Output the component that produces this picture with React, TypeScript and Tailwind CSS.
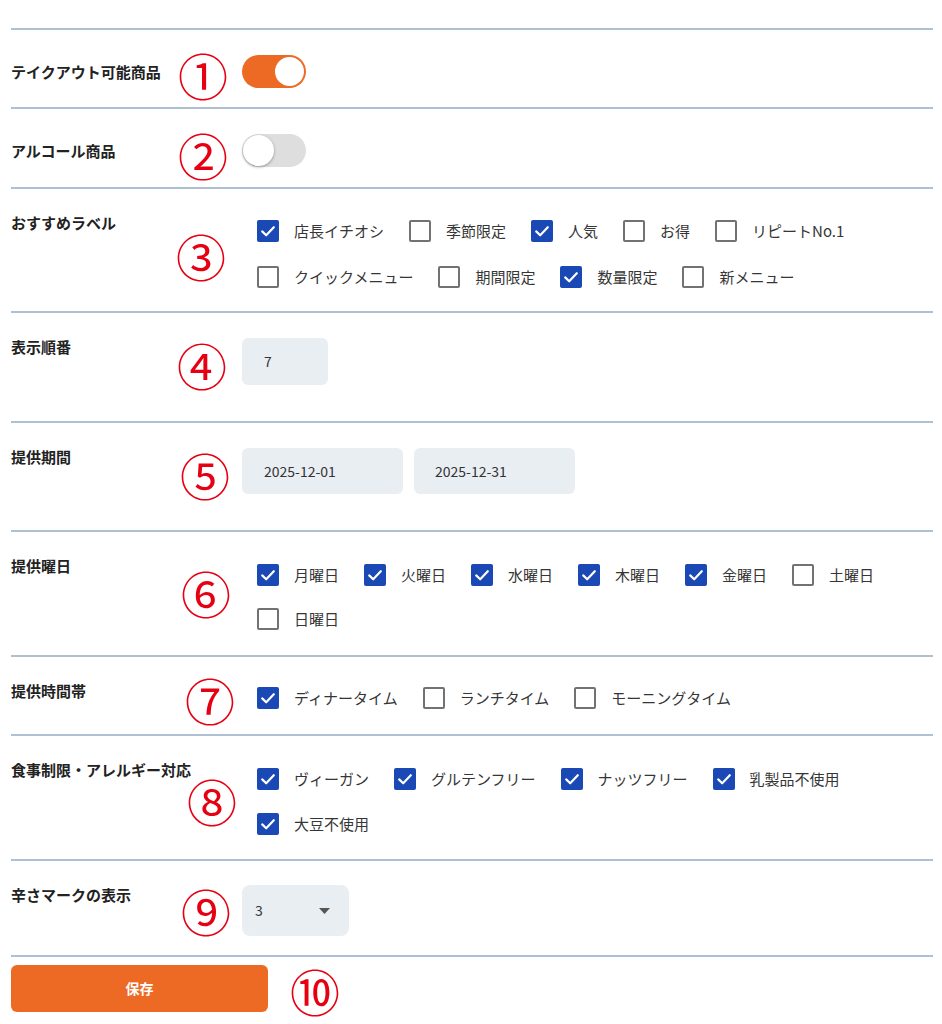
import React from "react";

const FONT = { fontFamily: '"Noto Sans CJK JP", "Noto Sans", sans-serif' };

function Mark({ ch, cls }: { ch: string; cls: string }) {
  return (
    <span
      className={`pointer-events-none absolute flex h-[50px] w-[50px] items-center justify-center text-[50px] leading-none text-[#e60012] ${cls}`}
    >
      {ch}
    </span>
  );
}

function Toggle({ on }: { on: boolean }) {
  return on ? (
    <div className="flex h-[33px] w-[64px] items-center justify-end rounded-full bg-[#ed6a25] px-[2px]">
      <div className="h-[29px] w-[29px] rounded-full bg-white" />
    </div>
  ) : (
    <div className="flex h-[33px] w-[64px] items-center justify-start rounded-full bg-[#dedede] px-[1px]">
      <div className="h-[31px] w-[31px] rounded-full bg-white shadow-[0_1px_3px_rgba(0,0,0,0.35)]" />
    </div>
  );
}

function Box({ checked }: { checked: boolean }) {
  return checked ? (
    <span className="flex h-[22px] w-[22px] shrink-0 items-center justify-center rounded-[2px] bg-[#1a48b4]">
      <svg width="22" height="22" viewBox="0 0 22 22" fill="none">
        <path d="M5.2 11.4 L9.2 15.3 L16.8 7.2" stroke="white" strokeWidth="2.2" strokeLinecap="round" strokeLinejoin="round" />
      </svg>
    </span>
  ) : (
    <span className="h-[22px] w-[22px] shrink-0 rounded-[2px] border-2 border-[#727272] bg-white" />
  );
}

function Checks({ items, lineCls }: { items: [string, boolean][]; lineCls: string }) {
  return (
    <div className="flex flex-wrap gap-x-[25px] pl-[15px]">
      {items.map(([t, c]) => (
        <div key={t} className={`flex items-center ${lineCls}`}>
          <Box checked={c} />
          <span className="ml-[15px] whitespace-nowrap text-[15px] leading-5 text-[#363636]">{t}</span>
        </div>
      ))}
    </div>
  );
}

function Label({ children, top = true }: { children: React.ReactNode; top?: boolean }) {
  return (
    <div className={`w-[231px] shrink-0 text-[15px] font-bold leading-5 text-[#222] ${top ? "pt-[24px]" : ""}`}>
      {children}
    </div>
  );
}

export default function App() {
  return (
    <div className="min-h-[1024px] bg-white pl-[11px] pr-[9px] pt-[28px]" style={FONT}>
      {/* row 1 */}
      <div className="relative flex items-center border-t-2 border-[#afc1d0] pb-[19px] pt-[25px]">
        <Label top={false}>テイクアウト可能商品</Label>
        <Toggle on={true} />
        <Mark ch="①" cls="left-[167px] top-[19px]" />
      </div>
      {/* row 2 */}
      <div className="relative flex items-center border-t-2 border-[#afc1d0] pb-[20px] pt-[25px]">
        <Label top={false}>アルコール商品</Label>
        <Toggle on={false} />
        <Mark ch="②" cls="left-[167px] top-[20px]" />
      </div>
      {/* row 3 */}
      <div className="relative flex border-t-2 border-[#afc1d0]">
        <Label>おすすめラベル</Label>
        <div className="flex-1 pb-[11px] pt-[19px]">
          <Checks
            lineCls="h-[46px]"
            items={[
              ["店長イチオシ", true],
              ["季節限定", false],
              ["人気", true],
              ["お得", false],
              ["リピートNo.1", false],
              ["クイックメニュー", false],
              ["期間限定", false],
              ["数量限定", true],
              ["新メニュー", false],
            ]}
          />
        </div>
        <Mark ch="③" cls="left-[165px] top-[41px]" />
      </div>
      {/* row 4 */}
      <div className="relative flex border-t-2 border-[#afc1d0]">
        <Label>表示順番</Label>
        <div className="flex-1 pb-[36px] pt-[25px]">
          <div className="flex h-[47px] w-[86px] items-center rounded-md bg-[#e9eef3] pl-[22px] text-[14px] text-[#333]">7</div>
        </div>
        <Mark ch="④" cls="left-[166px] top-[26px]" />
      </div>
      {/* row 5 */}
      <div className="relative flex border-t-2 border-[#afc1d0]">
        <Label>提供期間</Label>
        <div className="flex flex-1 gap-[11px] pb-[36px] pt-[25px]">
          <div className="flex h-[46px] w-[161px] items-center rounded-md bg-[#e9eef3] pl-[22px] text-[14px] text-[#333]">2025-12-01</div>
          <div className="flex h-[46px] w-[161px] items-center rounded-md bg-[#e9eef3] pl-[21px] text-[14px] text-[#333]">2025-12-31</div>
        </div>
        <Mark ch="⑤" cls="left-[169px] top-[26px]" />
      </div>
      {/* row 6 */}
      <div className="relative flex border-t-2 border-[#afc1d0]">
        <Label>提供曜日</Label>
        <div className="flex-1 pb-[14px] pt-[21px]">
          <Checks
            lineCls="h-[44px]"
            items={[
              ["月曜日", true],
              ["火曜日", true],
              ["水曜日", true],
              ["木曜日", true],
              ["金曜日", true],
              ["土曜日", false],
              ["日曜日", false],
            ]}
          />
        </div>
        <Mark ch="⑥" cls="left-[170px] top-[35px]" />
      </div>
      {/* row 7 */}
      <div className="relative flex border-t-2 border-[#afc1d0]">
        <Label>提供時間帯</Label>
        <div className="flex-1 pb-[14px] pt-[19px]">
          <Checks
            lineCls="h-[44px]"
            items={[
              ["ディナータイム", true],
              ["ランチタイム", false],
              ["モーニングタイム", false],
            ]}
          />
        </div>
        <Mark ch="⑦" cls="left-[174px] top-[17px]" />
      </div>
      {/* row 8 */}
      <div className="relative flex border-t-2 border-[#afc1d0]">
        <Label>食事制限・アレルギー対応</Label>
        <div className="flex-1 pb-[13px] pt-[20px]">
          <Checks
            lineCls="h-[45px]"
            items={[
              ["ヴィーガン", true],
              ["グルテンフリー", true],
              ["ナッツフリー", true],
              ["乳製品不使用", true],
              ["大豆不使用", true],
            ]}
          />
        </div>
        <Mark ch="⑧" cls="left-[176px] top-[39px]" />
      </div>
      {/* row 9 */}
      <div className="relative flex border-t-2 border-[#afc1d0]">
        <Label>辛さマークの表示</Label>
        <div className="flex-1 pb-[19px] pt-[24px]">
          <div className="flex h-[51px] w-[107px] items-center justify-between rounded-lg bg-[#e9eef3] pl-[13px] pr-[19px] text-[14px] text-[#333]">
            <span>3</span>
            <svg width="11" height="6" viewBox="0 0 11 6">
              <path d="M0 0 L11 0 L5.5 6 Z" fill="#555" />
            </svg>
          </div>
        </div>
        <Mark ch="⑨" cls="left-[170px] top-[24px]" />
      </div>
      {/* button row */}
      <div className="relative flex border-t-2 border-[#afc1d0] pt-[8px]">
        <button className="flex h-[47px] w-[257px] items-center justify-center rounded-md bg-[#ed6a25] text-[14px] font-bold text-white">
          保存
        </button>
        <Mark ch="⑩" cls="left-[279px] top-[8px]" />
      </div>
    </div>
  );
}
